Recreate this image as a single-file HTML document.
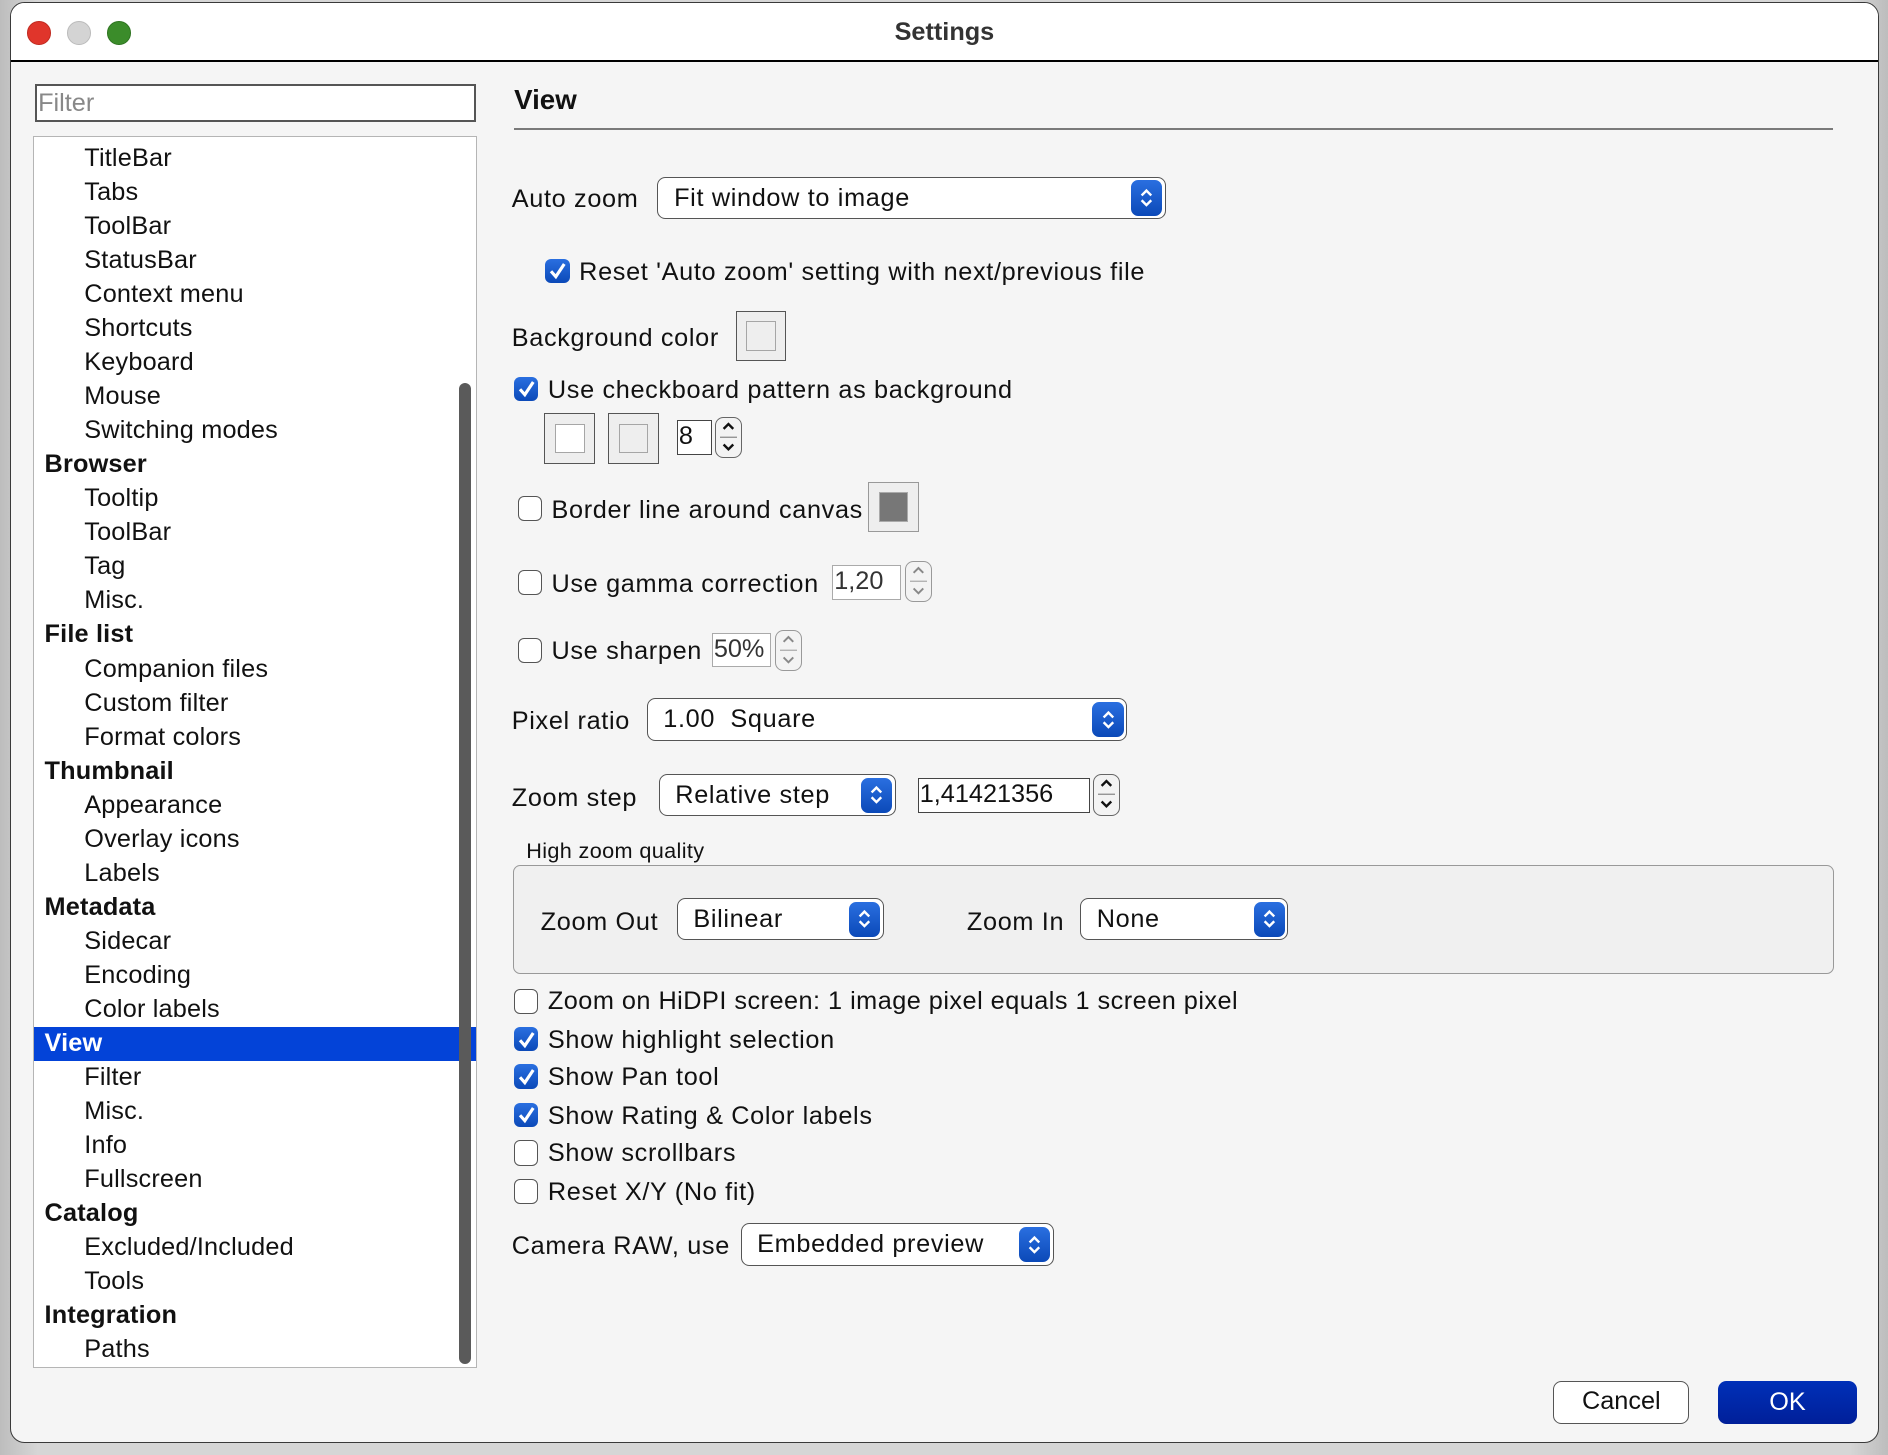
<!DOCTYPE html>
<html><head><meta charset="utf-8">
<style>
html,body{margin:0;padding:0;}
body{width:1888px;height:1454px;overflow:hidden;background:#c9c9c9;}
#root{zoom:1.2041;width:1568px;height:1208px;position:relative;font-family:"Liberation Sans",sans-serif;color:#111;background:linear-gradient(90deg,#bdbdbd,#d6d6d6 2%,#d6d6d6 98%,#bdbdbd);}
.win{position:absolute;left:8px;top:2px;width:1551px;height:1195px;border:1.5px solid #3a3a3a;border-radius:12px;background:#f5f5f5;overflow:hidden;}
.tb{position:absolute;left:0;top:0;width:100%;height:47px;background:#fff;border-bottom:2px solid #000;}
.dot{position:absolute;top:15px;width:18px;height:18px;border-radius:50%;}
.a{position:absolute;white-space:nowrap;}
.t{position:absolute;white-space:nowrap;line-height:24px;font-size:21px;letter-spacing:0.55px;margin-top:1px;}
.li{position:absolute;left:0;width:368px;height:28px;line-height:28px;font-size:21px;letter-spacing:0.15px;white-space:nowrap;}
.cb{position:absolute;width:20px;height:20px;border-radius:5px;box-sizing:border-box;}
.on{background:linear-gradient(#2a6fe0,#0b49b8);}
.off{background:#fff;border:1.5px solid #555;}
.on svg{position:absolute;left:2px;top:2px;}
.pop{position:absolute;background:#fff;border:1.5px solid #555;border-radius:7px;box-sizing:border-box;}
.pop .arr{position:absolute;right:2px;top:2px;bottom:2px;width:26px;border-radius:6px;background:linear-gradient(#2a6fe0,#0b49b8);}
.pop .arr svg{position:absolute;left:6px;top:50%;margin-top:-9px;}
.sw{position:absolute;width:42px;height:42px;box-sizing:border-box;border:1.5px solid #555;background:#eee;}
.sw i{position:absolute;left:8px;top:8px;width:23px;height:23px;border:1.5px solid #a6a6a6;}
.inp{position:absolute;background:#fff;border:1.5px solid #444;box-sizing:border-box;font-size:21px;line-height:26px;padding-left:1px;}
.spin{position:absolute;width:22px;box-sizing:border-box;border:1.5px solid #666;border-radius:7px;background:#f3f3f3;}
.spin svg{position:absolute;left:3px;}
</style></head><body><div id="root">
<div class="win">
 <div class="tb">
  <div class="dot" style="left:14px;background:#e0352b;border:1px solid #c02a20;"></div>
  <div class="dot" style="left:47px;background:#d4d4d4;border:1px solid #bbb;"></div>
  <div class="dot" style="left:80px;background:#3b8c2a;border:1px solid #2e7420;"></div>
  <div class="a" style="left:0;width:100%;text-align:center;top:12px;font-size:21px;font-weight:bold;color:#333;">Settings</div>
 </div>
</div>
<div class="a" style="left:29px;top:70px;width:366px;height:31px;box-sizing:border-box;border:2px solid #555;background:#fff;font-size:21px;line-height:29px;color:#888;padding-left:1px;">Filter</div>
<div class="a" style="left:27px;top:113px;width:369px;height:1023px;box-sizing:border-box;border:1px solid #b5b5b5;background:#fff;"></div>
<div id="sb" class="a" style="left:381px;top:318px;width:10px;height:815px;border-radius:5px;background:#5a5a5a;"></div>

<div class="a" style="left:427px;top:70px;font-size:23px;font-weight:bold;">View</div>
<div class="a" style="left:427px;top:106px;width:1095px;height:2px;background:#7a7a7a;"></div>

<div class="t" style="left:425px;top:153px;">Auto zoom</div>
<div class="pop" style="left:546px;top:147px;width:422px;height:35px;"><div class="t" style="left:13px;top:4px;">Fit window to image</div><div class="arr"><svg width="14" height="18"><path d="M3 7 L7 3 L11 7 M3 11 L7 15 L11 11" stroke="#fff" stroke-width="2" fill="none"/></svg></div></div>

<div class="cb on" style="left:453px;top:215px;"><svg width="16" height="16"><path d="M2.5 8.5 L6.5 13 L13.5 2.5" stroke="#fff" stroke-width="2.6" fill="none"/></svg></div>
<div class="t" style="left:481px;top:213px;">Reset 'Auto zoom' setting with next/previous file</div>

<div class="t" style="left:425px;top:268px;">Background color</div>
<div class="sw" style="left:611px;top:258px;"><i style="background:#eee"></i></div>

<div class="cb on" style="left:427px;top:313px;"><svg width="16" height="16"><path d="M2.5 8.5 L6.5 13 L13.5 2.5" stroke="#fff" stroke-width="2.6" fill="none"/></svg></div>
<div class="t" style="left:455px;top:311px;">Use checkboard pattern as background</div>
<div class="sw" style="left:452px;top:343px;"><i style="background:#fff"></i></div>
<div class="sw" style="left:505px;top:343px;"><i style="background:#eee"></i></div>
<div class="inp" style="left:562px;top:349px;width:29px;height:29px;">8</div>
<div class="spin" style="left:594px;top:346px;height:34px;"><svg width="14" height="32"><path d="M3 9 L7 5 L11 9 M3 22 L7 26 L11 22" stroke="#111" stroke-width="2" fill="none"/><path d="M-2 16 H16" stroke="#888" stroke-width="1"/></svg></div>

<div class="cb off" style="left:430px;top:412px;width:20px;height:21px;"></div>
<div class="t" style="left:458px;top:411px;">Border line around canvas</div>
<div class="sw" style="left:721px;top:400px;border-color:#999;"><i style="background:#777;border-color:#aaa;"></i></div>

<div class="cb off" style="left:430px;top:473px;width:20px;height:21px;"></div>
<div class="t" style="left:458px;top:472px;">Use gamma correction</div>
<div class="inp" style="left:691px;top:469px;width:57px;height:29px;border-color:#aaa;color:#333;">1,20</div>
<div class="spin" style="left:752px;top:466px;height:34px;border-color:#999;"><svg width="14" height="32"><path d="M3 9 L7 5 L11 9 M3 22 L7 26 L11 22" stroke="#888" stroke-width="1.6" fill="none"/><path d="M-2 16 H16" stroke="#aaa" stroke-width="1"/></svg></div>

<div class="cb off" style="left:430px;top:530px;width:20px;height:21px;"></div>
<div class="t" style="left:458px;top:528px;">Use sharpen</div>
<div class="inp" style="left:591px;top:526px;width:49px;height:28px;border-color:#aaa;color:#333;">50%</div>
<div class="spin" style="left:644px;top:523px;height:34px;border-color:#999;"><svg width="14" height="32"><path d="M3 9 L7 5 L11 9 M3 22 L7 26 L11 22" stroke="#888" stroke-width="1.6" fill="none"/><path d="M-2 16 H16" stroke="#aaa" stroke-width="1"/></svg></div>

<div class="t" style="left:425px;top:586px;">Pixel ratio</div>
<div class="pop" style="left:537px;top:580px;width:399px;height:35px;"><div class="t" style="left:13px;top:4px;">1.00&nbsp; Square</div><div class="arr"><svg width="14" height="18"><path d="M3 7 L7 3 L11 7 M3 11 L7 15 L11 11" stroke="#fff" stroke-width="2" fill="none"/></svg></div></div>

<div class="t" style="left:425px;top:650px;">Zoom step</div>
<div class="pop" style="left:547px;top:643px;width:197px;height:35px;"><div class="t" style="left:13px;top:4px;">Relative step</div><div class="arr"><svg width="14" height="18"><path d="M3 7 L7 3 L11 7 M3 11 L7 15 L11 11" stroke="#fff" stroke-width="2" fill="none"/></svg></div></div>
<div class="inp" style="left:762px;top:646px;width:143px;height:29px;">1,41421356</div>
<div class="spin" style="left:908px;top:643px;height:35px;"><svg width="14" height="32"><path d="M3 9 L7 5 L11 9 M3 22 L7 26 L11 22" stroke="#111" stroke-width="2" fill="none"/><path d="M-2 16 H16" stroke="#888" stroke-width="1"/></svg></div>

<div class="a" style="left:437px;top:696px;font-size:18px;letter-spacing:0.3px;">High zoom quality</div>
<div class="a" style="left:426px;top:718px;width:1097px;height:91px;box-sizing:border-box;border:1.5px solid #999;border-radius:6px;background:#f0f0f0;"></div>
<div class="t" style="left:449px;top:753px;">Zoom Out</div>
<div class="pop" style="left:562px;top:746px;width:172px;height:35px;"><div class="t" style="left:13px;top:4px;">Bilinear</div><div class="arr"><svg width="14" height="18"><path d="M3 7 L7 3 L11 7 M3 11 L7 15 L11 11" stroke="#fff" stroke-width="2" fill="none"/></svg></div></div>
<div class="t" style="left:803px;top:753px;">Zoom In</div>
<div class="pop" style="left:897px;top:746px;width:173px;height:35px;"><div class="t" style="left:13px;top:4px;">None</div><div class="arr"><svg width="14" height="18"><path d="M3 7 L7 3 L11 7 M3 11 L7 15 L11 11" stroke="#fff" stroke-width="2" fill="none"/></svg></div></div>

<div class="cb off" style="left:427px;top:821px;width:20px;height:21px;"></div>
<div class="t" style="left:455px;top:819px;letter-spacing:0.4px;">Zoom on HiDPI screen: 1 image pixel equals 1 screen pixel</div>
<div class="cb on" style="left:427px;top:853px;"><svg width="16" height="16"><path d="M2.5 8.5 L6.5 13 L13.5 2.5" stroke="#fff" stroke-width="2.6" fill="none"/></svg></div>
<div class="t" style="left:455px;top:851px;">Show highlight selection</div>
<div class="cb on" style="left:427px;top:884px;"><svg width="16" height="16"><path d="M2.5 8.5 L6.5 13 L13.5 2.5" stroke="#fff" stroke-width="2.6" fill="none"/></svg></div>
<div class="t" style="left:455px;top:882px;">Show Pan tool</div>
<div class="cb on" style="left:427px;top:916px;"><svg width="16" height="16"><path d="M2.5 8.5 L6.5 13 L13.5 2.5" stroke="#fff" stroke-width="2.6" fill="none"/></svg></div>
<div class="t" style="left:455px;top:914px;">Show Rating &amp; Color labels</div>
<div class="cb off" style="left:427px;top:947px;width:20px;height:21px;"></div>
<div class="t" style="left:455px;top:945px;">Show scrollbars</div>
<div class="cb off" style="left:427px;top:979px;width:20px;height:21px;"></div>
<div class="t" style="left:455px;top:977px;">Reset X/Y (No fit)</div>

<div class="t" style="left:425px;top:1022px;">Camera RAW, use</div>
<div class="pop" style="left:615px;top:1016px;width:260px;height:35px;"><div class="t" style="left:13px;top:4px;">Embedded preview</div><div class="arr"><svg width="14" height="18"><path d="M3 7 L7 3 L11 7 M3 11 L7 15 L11 11" stroke="#fff" stroke-width="2" fill="none"/></svg></div></div>

<div class="a" style="left:1290px;top:1147px;width:113px;height:36px;box-sizing:border-box;border:1.5px solid #555;border-radius:7px;background:#fff;text-align:center;line-height:33px;font-size:21px;">Cancel</div>
<div class="a" style="left:1427px;top:1147px;width:115px;height:36px;border-radius:7px;background:linear-gradient(#0030b8,#001f99);color:#fff;text-align:center;line-height:36px;font-size:21px;">OK</div>

<script>
(function(){
var items=[["TitleBar",0],["Tabs",0],["ToolBar",0],["StatusBar",0],["Context menu",0],["Shortcuts",0],["Keyboard",0],["Mouse",0],["Switching modes",0],["Browser",1],["Tooltip",0],["ToolBar",0],["Tag",0],["Misc.",0],["File list",1],["Companion files",0],["Custom filter",0],["Format colors",0],["Thumbnail",1],["Appearance",0],["Overlay icons",0],["Labels",0],["Metadata",1],["Sidecar",0],["Encoding",0],["Color labels",0],["View",2],["Filter",0],["Misc.",0],["Info",0],["Fullscreen",0],["Catalog",1],["Excluded/Included",0],["Tools",0],["Integration",1],["Paths",0]];
var root=document.getElementById('root');
var html='';
for(var i=0;i<items.length;i++){
 var cy=132+i*28.26, top=cy-14;
 var it=items[i];
 var st='left:28px;top:'+top.toFixed(1)+'px;';
 if(it[1]==2){st+='background:#0343d8;color:#fff;font-weight:bold;padding-left:9px;width:358px;';}
 else if(it[1]==1){st+='font-weight:bold;padding-left:9px;width:358px;';}
 else st+='padding-left:42px;width:325px;';
 html+='<div class="li" style="'+st+'">'+it[0]+'</div>';
}
var d=document.createElement('div');d.innerHTML=html;
var sb=document.getElementById('sb');
while(d.firstChild)root.insertBefore(d.firstChild,sb);
})();
</script>
</div></body></html>
